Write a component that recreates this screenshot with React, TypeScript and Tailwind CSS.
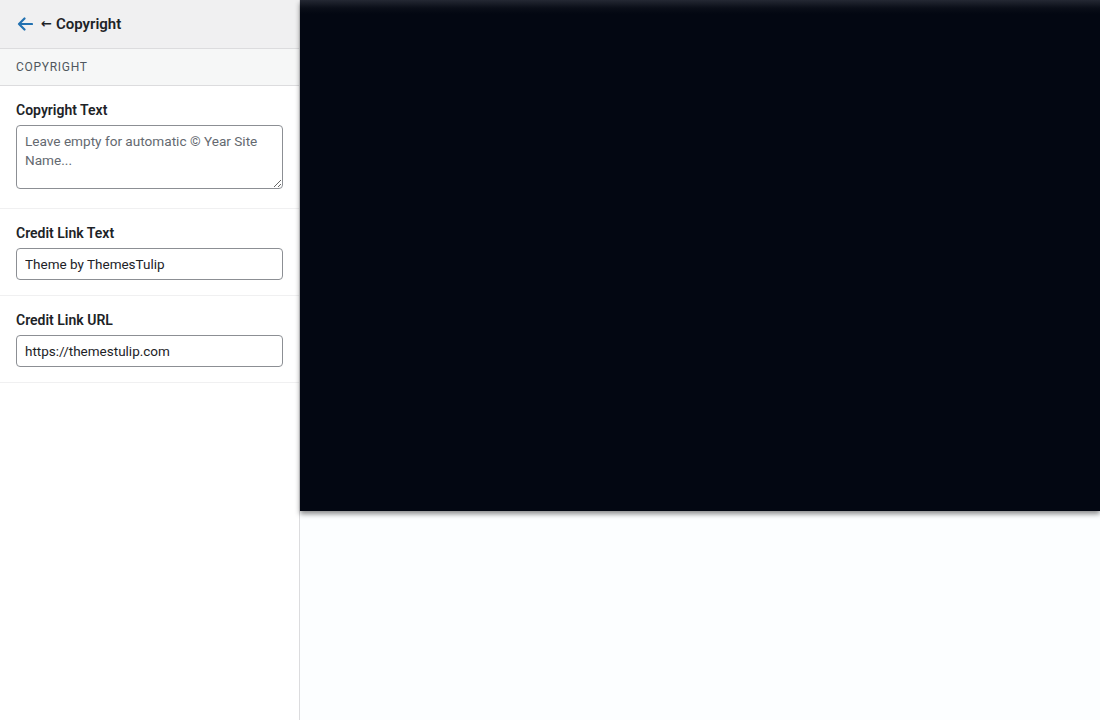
import { useState } from "react";

function BackArrow() {
  return (
    <svg
      width="16"
      height="14"
      viewBox="0 0 16 14"
      fill="none"
      stroke="#2271b1"
      strokeWidth="2.2"
      strokeLinecap="round"
      strokeLinejoin="round"
    >
      <path d="M15 7H2M7.5 1.5 2 7l5.5 5.5" />
    </svg>
  );
}

function Field({
  label,
  children,
}: {
  label: string;
  children: React.ReactNode;
}) {
  return (
    <div className="border-b border-[#f0f0f1] px-4 pt-[14px] pb-[15px]">
      <label className="mb-[5px] block text-[14px] leading-5 font-semibold text-[#1d2327]">
        {label}
      </label>
      {children}
    </div>
  );
}

export default function App() {
  const [copyright, setCopyright] = useState("");
  const [creditText, setCreditText] = useState("Theme by ThemesTulip");
  const [creditUrl, setCreditUrl] = useState("https://themestulip.com");

  return (
    <div className="flex h-[720px] w-[1100px] font-['Roboto',sans-serif] text-[#1d2327]">
      <aside className="flex w-[300px] shrink-0 flex-col border-r border-[#dcdcde] bg-white">
        <div className="flex h-[49px] items-center border-b border-[#dcdcde] bg-[#f0f0f1] pr-4 pl-[17px]">
          <BackArrow />
          <h1 className="ml-[8px] flex items-center text-[15px] font-semibold">
            <span className="mr-[4px] font-['DejaVu_Sans',sans-serif] text-[13px] font-bold">
              ←
            </span>
            Copyright
          </h1>
        </div>

        <div className="flex h-[37px] items-center border-b border-[#dcdcde] bg-[#f6f7f7] px-4 text-[12px] tracking-[0.06em] text-[#50575e] uppercase">
          Copyright
        </div>

        <Field label="Copyright Text">
          <textarea
            value={copyright}
            onChange={(e) => setCopyright(e.target.value)}
            placeholder="Leave empty for automatic © Year Site Name..."
            className="mb-[4px] block h-16 w-full resize-y rounded-[4px] border border-[#8c8f94] px-2 py-[6px] text-[13.6px] leading-[19px] placeholder:text-[#646970] focus:outline-none"
          />
        </Field>

        <Field label="Credit Link Text">
          <input
            value={creditText}
            onChange={(e) => setCreditText(e.target.value)}
            className="block h-8 w-full rounded-[4px] border border-[#8c8f94] px-2 text-[13.5px] focus:outline-none"
          />
        </Field>

        <Field label="Credit Link URL">
          <input
            value={creditUrl}
            onChange={(e) => setCreditUrl(e.target.value)}
            className="block h-8 w-full rounded-[4px] border border-[#8c8f94] px-2 text-[13.5px] focus:outline-none"
          />
        </Field>
      </aside>

      <main className="flex flex-1 flex-col bg-[#fcfeff]">
        <div className="h-[511px] bg-[linear-gradient(to_bottom,#242833_0px,#0a0e18_8px,#030712_14px)] shadow-[0_3px_5px_rgba(0,0,0,0.45)]" />
      </main>
    </div>
  );
}
